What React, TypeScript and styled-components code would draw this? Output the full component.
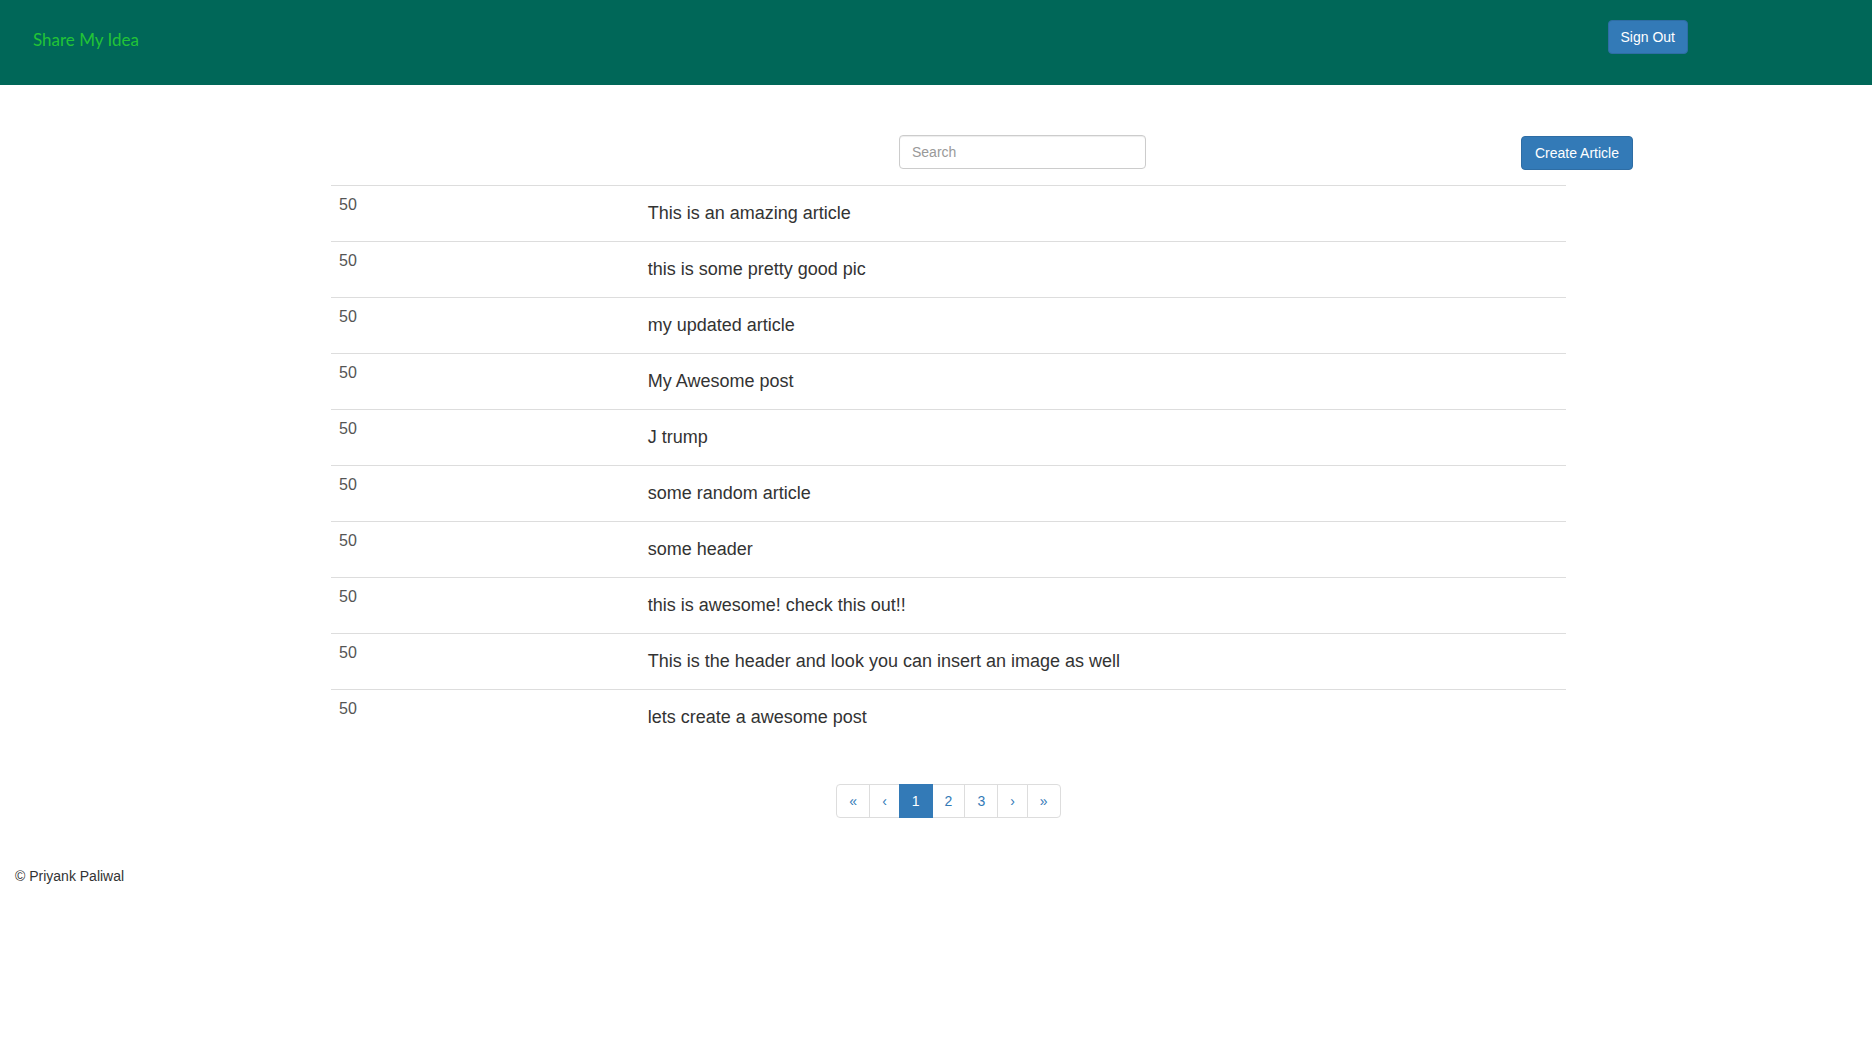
import styled, { createGlobalStyle } from 'styled-components'

const articles = [
  'This is an amazing article',
  'this is some pretty good pic',
  'my updated article',
  'My Awesome post',
  'J trump',
  'some random article',
  'some header',
  'this is awesome! check this out!!',
  'This is the header and look you can insert an image as well',
  'lets create a awesome post',
]

const pages = ['«', '‹', '1', '2', '3', '›', '»']

export default function App() {
  return (
    <>
      <GlobalStyle />
      <Navbar>
        <Brand href='#'>Share My Idea</Brand>
        <SignOutButton type='button'>Sign Out</SignOutButton>
      </Navbar>
      <Main>
        <Toolbar>
          <SearchInput type='text' placeholder='Search' />
          <CreateButton type='button'>Create Article</CreateButton>
        </Toolbar>
        <Board>
          <ArticleTable>
            <colgroup>
              <col style={{ width: '25%' }} />
              <col />
            </colgroup>
            <tbody>
              {articles.map((title, i) => (
                <tr key={i}>
                  <VotesCell>50</VotesCell>
                  <TitleCell>
                    <ArticleTitle>{title}</ArticleTitle>
                  </TitleCell>
                </tr>
              ))}
            </tbody>
          </ArticleTable>
          <Pagination>
            {pages.map((p, i) => (
              <PageItem key={i} active={p === '1'}>
                <PageLink href='#' active={p === '1'} first={i === 0} last={i === pages.length - 1}>
                  {p}
                </PageLink>
              </PageItem>
            ))}
          </Pagination>
        </Board>
      </Main>
      <Footer>© Priyank Paliwal</Footer>
    </>
  )
}

const GlobalStyle = createGlobalStyle`
  * {
    box-sizing: border-box;
  }
  body {
    margin: 0;
    font-family: "Liberation Sans", Arial, sans-serif;
    font-size: 14px;
    line-height: 1.42857;
    color: #333;
    background: #fff;
  }
`

const Navbar = styled.header`
  display: flex;
  align-items: flex-start;
  height: 85px;
  background: #006758;
`

const Brand = styled.a`
  margin: 30px 0 0 33px;
  font-family: Lato, "Open Sans", sans-serif;
  font-size: 17px;
  line-height: 20px;
  color: #22c436;
  text-decoration: none;
`

const Button = styled.button`
  display: inline-block;
  padding: 6px 12px;
  font-family: "Liberation Sans", Arial, sans-serif;
  font-size: 14px;
  line-height: 20px;
  color: #fff;
  background: #337ab7;
  border: 1px solid #2e6da4;
  border-radius: 4px;
  cursor: pointer;
  white-space: nowrap;
`

const SignOutButton = styled(Button)`
  margin: 20px 184px 0 auto;
`

const Main = styled.main`
  width: 1302px;
  margin: 50px 0 0 331px;
`

const Toolbar = styled.div`
  display: flex;
  align-items: flex-start;
`

const SearchInput = styled.input`
  width: 247px;
  height: 34px;
  margin-left: 568px;
  padding: 6px 12px;
  font-family: "Liberation Sans", Arial, sans-serif;
  font-size: 14px;
  color: #555;
  border: 1px solid #ccc;
  border-radius: 4px;
  box-shadow: inset 0 1px 1px rgba(0, 0, 0, 0.075);
  outline: none;

  &::placeholder {
    color: #999;
  }
`

const CreateButton = styled(Button)`
  margin: 1px 0 0 auto;
  padding: 6px 13px;
`

const Board = styled.div`
  width: 1235px;
  margin-top: 15px;
  text-align: center;
`

const ArticleTable = styled.table`
  width: 100%;
  margin-bottom: 18px;
  border-collapse: collapse;
  border-spacing: 0;
  table-layout: fixed;
  text-align: left;
`

const Cell = styled.td`
  height: 56px;
  padding: 8px;
  vertical-align: top;
  border-top: 1px solid #ddd;
`

const VotesCell = styled(Cell)`
  font-size: 16px;
  line-height: 1.42857;
  color: #555;
`

const TitleCell = styled(Cell)`
  color: #333;
`

const ArticleTitle = styled.h4`
  margin: 10px 0;
  font-size: 18px;
  font-weight: 500;
  line-height: 19px;
  color: #333;
`

const Pagination = styled.ul`
  display: inline-flex;
  margin: 20px 0;
  padding: 0;
  list-style: none;
`

const PageItem = styled.li<{ active?: boolean }>`
  display: block;
  position: relative;
  z-index: ${p => (p.active ? 2 : 'auto')};
`

const PageLink = styled.a<{ active?: boolean; first?: boolean; last?: boolean }>`
  display: block;
  margin-left: ${p => (p.first ? '0' : '-1px')};
  padding: 6px 12px;
  line-height: 20px;
  color: ${p => (p.active ? '#fff' : '#337ab7')};
  background: ${p => (p.active ? '#337ab7' : '#fff')};
  border: 1px solid ${p => (p.active ? '#337ab7' : '#ddd')};
  border-radius: ${p => (p.first ? '4px 0 0 4px' : p.last ? '0 4px 4px 0' : '0')};
  text-decoration: none;
`

const Footer = styled.footer`
  padding: 29px 15px;
  text-align: left;
`
